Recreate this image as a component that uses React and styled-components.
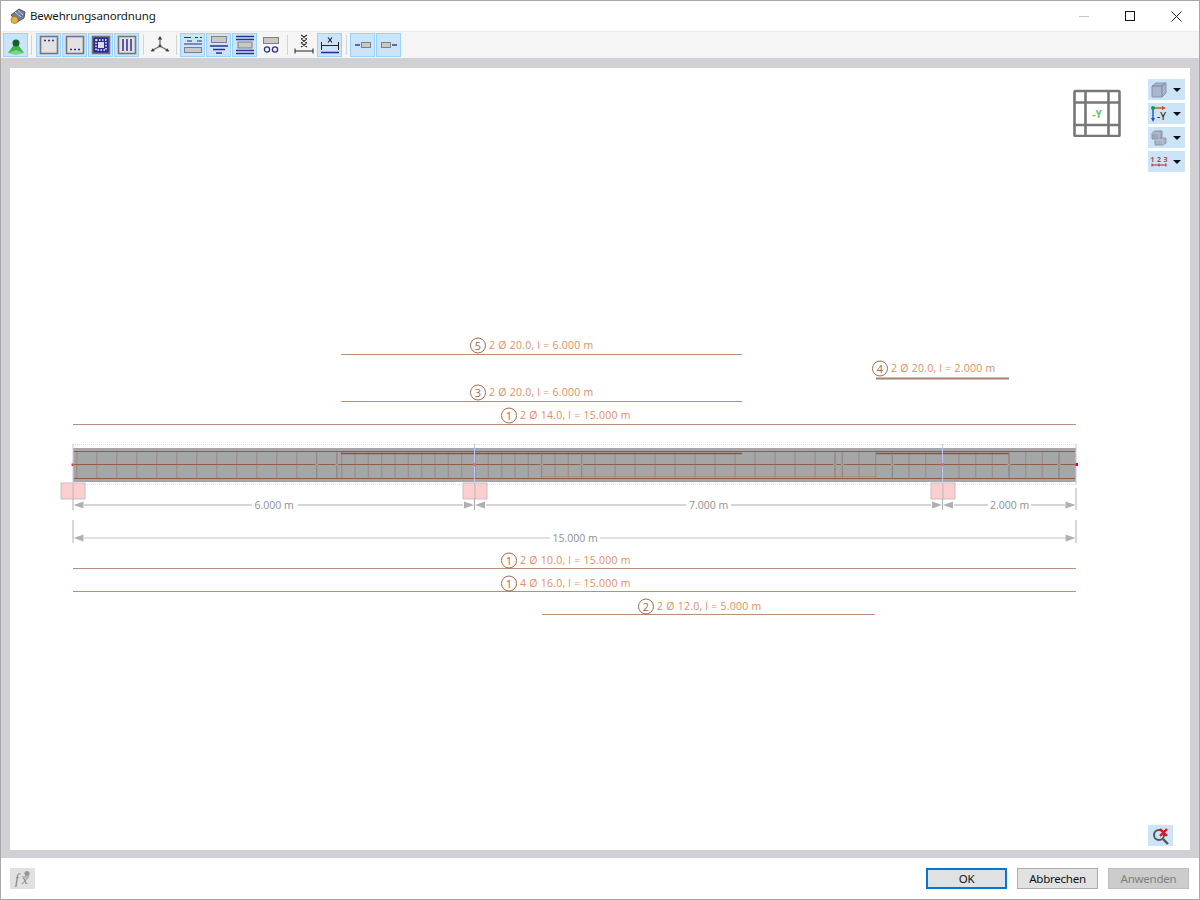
import React from 'react';
import styled, { createGlobalStyle } from 'styled-components';

const GlobalStyle = createGlobalStyle`
    html, body {
        margin: 0;
        padding: 0;
        height: 100%;
        background: white;
    }
    #root {
        height: 100%;
    }
`

//Styling
const Window = styled.div`
    box-sizing: border-box;
    width: 1200px;
    height: 900px;
    display: flex;
    flex-direction: column;
    background: white;
    border: 1px solid #a8a8a8;
    font-family: "Noto Sans", "Open Sans", sans-serif;
    font-size: 12px;
    color: #1a1a1a;
`

const TitleBar = styled.div`
    height: 30px;
    display: flex;
    align-items: center;
    padding-left: 8px;
`

const Title = styled.div`
    flex: 1;
    margin-left: 3px;
    padding-bottom: 2px;
    font-size: 11.5px;
    letter-spacing: -0.15px;
`

const WindowButton = styled.div`
    width: 46px;
    height: 30px;
    display: flex;
    align-items: center;
    justify-content: center;
`

const Toolbar = styled.div`
    height: 27px;
    display: flex;
    align-items: center;
    padding-left: 2px;
    background: #f5f5f5;
    border-top: 1px solid #ececec;
    box-sizing: border-box;
`

const ToolButton = styled.div`
    box-sizing: border-box;
    width: 25px;
    height: 24px;
    margin-right: 1px;
    display: flex;
    align-items: center;
    justify-content: center;
    background: ${props => props.$on ? '#cce4f7' : 'transparent'};
    border: 1px solid ${props => props.$on ? '#99d1ff' : 'transparent'};
`

const Separator = styled.div`
    width: 1px;
    height: 20px;
    margin: 0 ${props => props.$right || 3}px 0 ${props => props.$left || 3}px;
    background: #d4d4d4;
`

const Workspace = styled.div`
    flex: 1;
    display: flex;
    padding: 10px 9px 8px;
    background: #d0d0d5;
`

const Canvas = styled.div`
    position: relative;
    flex: 1;
    background: white;
`

const Drawing = styled.svg`
    display: block;
    width: 100%;
    height: 100%;
`

const Label = styled.text`
    font-family: "Open Sans", "Noto Sans", sans-serif;
    font-size: 10.5px;
    letter-spacing: 0.25px;
    fill: #e38d62;
`

const Bubble = styled.text`
    font-family: "Open Sans", "Noto Sans", sans-serif;
    font-size: 11px;
    fill: #a5684c;
    text-anchor: middle;
`

const DimText = styled.text`
    font-family: "Open Sans", "Noto Sans", sans-serif;
    font-size: 10.5px;
    fill: #8f8f8f;
    text-anchor: middle;
`

const CubeLabel = styled.text`
    font-family: "Noto Sans", sans-serif;
    font-size: 10px;
    font-weight: 700;
    fill: #62c46c;
    text-anchor: middle;
`

const IconText = styled.text`
    font-family: "Noto Sans", sans-serif;
    font-size: ${props => props.$size || 8}px;
    font-weight: ${props => props.$weight || 400};
    fill: ${props => props.$color || '#111'};
`

const FormulaText = styled.text`
    font-family: "Liberation Serif", serif;
    font-style: italic;
    font-size: ${props => props.$size || 13}px;
    fill: #808080;
`

const ViewCube = styled.svg`
    position: absolute;
    top: 21px;
    right: 69px;
`

const SideTools = styled.div`
    position: absolute;
    top: 11px;
    right: 5px;
    display: flex;
    flex-direction: column;
    gap: 3px;
`

const SideButton = styled.div`
    width: 37px;
    height: 21px;
    display: flex;
    align-items: center;
    padding-left: 1px;
    box-sizing: border-box;
    gap: 4px;
    background: #cce4f7;
`

const Caret = styled.div`
    width: 0;
    height: 0;
    border-left: 4px solid transparent;
    border-right: 4px solid transparent;
    border-top: 4px solid #111;
`

const ClearButton = styled.div`
    position: absolute;
    right: 17px;
    bottom: 4px;
    width: 25px;
    height: 21px;
    display: flex;
    align-items: center;
    justify-content: center;
    background: #cce4f7;
`

const Footer = styled.div`
    height: 41px;
    box-sizing: border-box;
    display: flex;
    align-items: center;
    padding: 0 10px 0 9px;
`

const FormulaButton = styled.div`
    width: 25px;
    height: 21px;
    margin-right: auto;
    display: flex;
    align-items: center;
    justify-content: center;
    background: #e1e1e1;
`

const Button = styled.div`
    box-sizing: border-box;
    width: 81px;
    height: 21px;
    margin-left: 10px;
    display: flex;
    align-items: center;
    justify-content: center;
    font-size: 11.5px;
    letter-spacing: -0.25px;
    background: ${props => props.$disabled ? '#cccccc' : '#e1e1e1'};
    color: ${props => props.$disabled ? '#7f7f7f' : '#111'};
    border: ${props => props.$primary ? '2px solid #0078d7' : props.$disabled ? '1px solid #bfbfbf' : '1px solid #adadad'};
`

//Data for the drawing, in page coordinates
const rebars = [
    { mark: 5, text: '2 Ø 20.0, l = 6.000 m', x1: 341, x2: 742, y: 354, cx: 478, ly: 345 },
    { mark: 4, text: '2 Ø 20.0, l = 2.000 m', x1: 876, x2: 1009, y: 378, cx: 880, ly: 368, thick: true },
    { mark: 3, text: '2 Ø 20.0, l = 6.000 m', x1: 341, x2: 742, y: 401, cx: 478, ly: 392 },
    { mark: 1, text: '2 Ø 14.0, l = 15.000 m', x1: 73, x2: 1076, y: 424, cx: 509, ly: 415 },
    { mark: 1, text: '2 Ø 10.0, l = 15.000 m', x1: 73, x2: 1076, y: 568, cx: 509, ly: 560 },
    { mark: 1, text: '4 Ø 16.0, l = 15.000 m', x1: 73, x2: 1076, y: 591, cx: 509, ly: 583 },
    { mark: 2, text: '2 Ø 12.0, l = 5.000 m', x1: 542, x2: 875, y: 614, cx: 646, ly: 606 },
]

const range = (start, step, count) => Array.from({ length: count }, (_, i) => start + step * i)

const stirrups = [
    ...range(76.7, 20, 14),
    ...range(341.7, 13.33, 20),
    ...range(615, 20, 12),
    ...range(842.3, 16.67, 14),
]

//stirrups that carry a small ring at mid height
const ringed = [316.7, 336.7, 541.7, 581.7, 835, 842.3, 892.3, 1009, 1059]

const supports = [73, 475, 943]
const gridLines = [73, 474.5, 942.5, 1076]

function ArrowHead({ x, y, dir }) {
    return <polygon points={`${x},${y} ${x + dir * 10},${y - 3.5} ${x + dir * 10},${y + 3.5}`} fill="#b0b0b0" />
}

function Beam() {
    return (
        <g>
            <rect x="73" y="448" width="1003" height="34" fill="#a6a6a6" />
            {stirrups.map(x => (
                <path key={x} d={`M${x} 451V479`} stroke="#9d908d" strokeWidth="1.4" />
            ))}
            <path d="M74 451.5H1075M74 464.5H1075M74 478.5H1075" stroke="#8f5f45" strokeWidth="1" />
            <path d="M341 453.5H742M876 453.5H1009" stroke="#85563f" strokeWidth="1.6" />
            <path d="M542 476.5H875" stroke="#a8908a" strokeWidth="1" />
            {ringed.map(x => (
                <g key={x}>
                    <path d={`M${x} 453V477`} stroke="#8f8481" strokeWidth="0.8" />
                    <circle cx={x} cy="464.5" r="1.3" fill="#a6a6a6" stroke="#918a88" strokeWidth="0.6" />
                </g>
            ))}
            <path d="M73 444.5H1076M73 484.5H1076" stroke="#d8d4fb" strokeWidth="1" strokeDasharray="1 1" />
            {supports.map(x => (
                <rect key={x} x={x - 12} y="483" width="24" height="16" fill="#fbcfd0" stroke="#c6c2c2" />
            ))}
            {gridLines.map(x => (
                <path key={x} d={`M${x} 444V484`} stroke="#c5c3f2" strokeWidth="1" />
            ))}
            <path d="M73 484V499M475 484V499M943 484V499" stroke="#bdb5b5" strokeWidth="1" />
            <rect x="71.5" y="463.5" width="2" height="2.5" fill="#f03040" />
            <rect x="1075.5" y="463" width="2.5" height="3" fill="#f00020" />
            <circle cx="474.5" cy="464.5" r="1.5" fill="#d86a70" />
            <circle cx="942.5" cy="464.5" r="1.5" fill="#d86a70" />
        </g>
    )
}

function Dimensions() {
    return (
        <g>
            <path d="M73 499V510M474.5 499V510M942.5 499V510M1076 488V510M73 520V543M1076 520V543" stroke="#b0b0b0" strokeWidth="1" />
            <path d="M84 505H252M298 505H463M486 505H686M731 505H931M954 505H988M1031 505H1065" stroke="#c8c8c8" strokeWidth="1.6" />
            <path d="M84 538H550M600 538H1065" stroke="#c4c4c4" strokeWidth="1.2" />
            <ArrowHead x={73.5} y={505} dir={1} />
            <ArrowHead x={474} y={505} dir={-1} />
            <ArrowHead x={475} y={505} dir={1} />
            <ArrowHead x={942} y={505} dir={-1} />
            <ArrowHead x={943} y={505} dir={1} />
            <ArrowHead x={1075.5} y={505} dir={-1} />
            <ArrowHead x={73.5} y={538} dir={1} />
            <ArrowHead x={1075.5} y={538} dir={-1} />
            <DimText x="274" y="509">6.000 m</DimText>
            <DimText x="708.5" y="509">7.000 m</DimText>
            <DimText x="1009.5" y="509">2.000 m</DimText>
            <DimText x="575" y="542">15.000 m</DimText>
        </g>
    )
}

function Rebar({ bar }) {
    return (
        <g>
            <path d={`M${bar.x1} ${bar.y + 0.5}H${bar.x2}`} stroke={bar.thick ? '#a87f68' : '#bd8d74'} strokeWidth={bar.thick ? 2 : 1} />
            <circle cx={bar.cx} cy={bar.ly + 0.5} r="7.5" fill="white" stroke="#a5684c" strokeWidth="1" />
            <Bubble x={bar.cx} y={bar.ly + 4.5}>{bar.mark}</Bubble>
            <Label x={bar.cx + 11} y={bar.ly + 4}>{bar.text}</Label>
        </g>
    )
}

const Icon = ({ children, size = 22 }) => (
    <svg width={size} height={size} viewBox="0 0 22 22">{children}</svg>
)

const GrayBox = props => <rect fill="#c8c8c8" stroke="#808080" strokeWidth="1" {...props} />

const NAVY = '#2b2f9c'

const toolIcons = {
    person: (
        <Icon>
            <polygon points="3,19 8,12 14,12 19,19" fill="#3cb44b" />
            <polygon points="3,19 11,16 19,19 11,21" fill="#7ad684" />
            <circle cx="11" cy="9" r="3.5" fill="#14602a" />
        </Icon>
    ),
    dotsTop: (
        <Icon>
            <rect x="2.5" y="2.5" width="17" height="17" fill="#e2e2e2" stroke="#777" strokeWidth="1.6" />
            <path d="M6 6.5h2M10 6.5h2M14 6.5h2" stroke={NAVY} strokeWidth="1.5" />
        </Icon>
    ),
    dotsBottom: (
        <Icon>
            <rect x="2.5" y="2.5" width="17" height="17" fill="#e2e2e2" stroke="#777" strokeWidth="1.6" />
            <path d="M6 15.5h2M10 15.5h2M14 15.5h2" stroke={NAVY} strokeWidth="1.5" />
        </Icon>
    ),
    dotsAround: (
        <Icon>
            <rect x="2.5" y="2.5" width="17" height="17" fill={NAVY} stroke="#777" strokeWidth="1.6" />
            <rect x="6" y="6" width="10" height="10" fill="none" stroke="white" strokeWidth="1.4" strokeDasharray="1.5 1.5" />
            <rect x="8" y="8" width="6" height="6" fill="#dcdcec" />
        </Icon>
    ),
    bars: (
        <Icon>
            <rect x="2.5" y="2.5" width="17" height="17" fill="#e2e2e2" stroke="#777" strokeWidth="1.6" />
            <path d="M7 5v12M11 5v12M15 5v12" stroke={NAVY} strokeWidth="1.5" />
        </Icon>
    ),
    axes: (
        <Icon>
            <path d="M11 12V5M11 12L4 16M11 12L18 16" stroke="#666" strokeWidth="1.2" fill="none" />
            <path d="M11 2l-2.3 3.5h4.600zM1.5 17.5l4.200-.3-1.800-3zM20.500 17.500l-4.200-.3 1.800-3z" fill="#3c3c3c" />
            <circle cx="11" cy="12" r="1.4" fill="#444" />
        </Icon>
    ),
    layersTop: (
        <Icon>
            <path d="M2 3.5h7M13 3.5h3M18 3.5h2M5 7h5M15 7h5M2 10h18" stroke={NAVY} strokeWidth="1.2" />
            <GrayBox x="2.5" y="13.5" width="17" height="5" />
        </Icon>
    ),
    funnel: (
        <Icon>
            <GrayBox x="3.5" y="2.5" width="15" height="6" />
            <path d="M2 12h18M5 15.5h12M8 19h6" stroke={NAVY} strokeWidth="1.3" />
        </Icon>
    ),
    stack: (
        <Icon>
            <path d="M2 2.5h18M2 5.5h18M2 16.5h18M2 19.5h18" stroke={NAVY} strokeWidth="1.3" />
            <GrayBox x="4" y="8" width="14" height="6" />
        </Icon>
    ),
    rings: (
        <Icon>
            <GrayBox x="3.5" y="3.5" width="15" height="6" />
            <circle cx="7" cy="15.5" r="2.6" fill="none" stroke={NAVY} strokeWidth="1.3" />
            <circle cx="15" cy="15.5" r="2.6" fill="none" stroke={NAVY} strokeWidth="1.3" />
        </Icon>
    ),
    coil: (
        <Icon>
            <path d="M8 1L14 5M14 1L8 5M8 5L14 9M14 5L8 9M8 9L14 13M14 9L8 13" stroke="#333" strokeWidth="1.2" fill="none" />
            <path d="M2 17H20M2 14.5v5M20 14.5v5" stroke="#222" strokeWidth="1" />
        </Icon>
    ),
    span: (
        <Icon>
            <path d="M9 3.5l4 5M13 3.5L9 8.5" stroke="#222" strokeWidth="1.2" />
            <path d="M3 11.5H19M2.5 8v8M19.5 8v8" stroke="#222" strokeWidth="1" />
            <path d="M2 18.5H20" stroke={NAVY} strokeWidth="1.6" />
        </Icon>
    ),
    lapLeft: (
        <Icon>
            <path d="M3 11h5" stroke={NAVY} strokeWidth="1.4" />
            <GrayBox x="9.5" y="8.5" width="9" height="5" />
        </Icon>
    ),
    lapRight: (
        <Icon>
            <GrayBox x="3.5" y="8.5" width="9" height="5" />
            <path d="M14 11h5" stroke={NAVY} strokeWidth="1.4" />
        </Icon>
    ),
}

const SideIcon = ({ children }) => <svg width="20" height="20" viewBox="0 0 20 20">{children}</svg>

export default function App() {
    return (
        <Window>
            <GlobalStyle />
            <TitleBar>
                <svg width="18" height="18" viewBox="0 0 18 18">
                    <path d="M2 8L10 2l6 3-1 6-7 4z" fill="#6f7f98" stroke="#333c50" strokeWidth="0.8" />
                    <path d="M6 5l6 5M9 3.5l5 4.500" stroke="#c4cede" strokeWidth="1" />
                    <circle cx="5.5" cy="13" r="3.6" fill="#e8b23a" stroke="#8a6a20" strokeWidth="0.6" />
                </svg>
                <Title>Bewehrungsanordnung</Title>
                <WindowButton>
                    <svg width="10" height="10"><path d="M0 5.5H10" stroke="#c8c8c8" /></svg>
                </WindowButton>
                <WindowButton>
                    <svg width="10" height="10"><rect x="0.5" y="0.5" width="9" height="9" fill="none" stroke="#111" /></svg>
                </WindowButton>
                <WindowButton>
                    <svg width="11" height="11"><path d="M0.5 0.5L10.5 10.5M10.5 0.5L0.5 10.5" stroke="#222" /></svg>
                </WindowButton>
            </TitleBar>
            <Toolbar>
                <ToolButton $on>{toolIcons.person}</ToolButton>
                <Separator $left={2} $right={4} />
                <ToolButton $on>{toolIcons.dotsTop}</ToolButton>
                <ToolButton $on>{toolIcons.dotsBottom}</ToolButton>
                <ToolButton $on>{toolIcons.dotsAround}</ToolButton>
                <ToolButton $on>{toolIcons.bars}</ToolButton>
                <Separator />
                <ToolButton>{toolIcons.axes}</ToolButton>
                <Separator />
                <ToolButton $on>{toolIcons.layersTop}</ToolButton>
                <ToolButton $on>{toolIcons.funnel}</ToolButton>
                <ToolButton $on>{toolIcons.stack}</ToolButton>
                <ToolButton>{toolIcons.rings}</ToolButton>
                <Separator />
                <ToolButton>{toolIcons.coil}</ToolButton>
                <ToolButton $on>{toolIcons.span}</ToolButton>
                <Separator />
                <ToolButton $on>{toolIcons.lapLeft}</ToolButton>
                <ToolButton $on>{toolIcons.lapRight}</ToolButton>
            </Toolbar>
            <Workspace>
                <Canvas>
                    <Drawing viewBox="10 68 1180 781" preserveAspectRatio="xMinYMin meet">
                        {rebars.map(bar => <Rebar key={bar.text + bar.y} bar={bar} />)}
                        <Beam />
                        <Dimensions />
                    </Drawing>
                    <ViewCube width="48" height="48" viewBox="0 0 48 48">
                        <rect x="1.5" y="2" width="45" height="45" rx="1" fill="none" stroke="#777" strokeWidth="2.6" />
                        <path d="M12.5 2V47M35.5 2V47M1.5 13.5H46.5M1.5 36H46.5" stroke="#777" strokeWidth="2.6" />
                        <CubeLabel x="24" y="29">-Y</CubeLabel>
                    </ViewCube>
                    <SideTools>
                        <SideButton>
                            <SideIcon>
                                <path d="M3 6l4-3h10v10l-4 4H3z" fill="#a9b6cf" stroke="#8a93a8" />
                                <path d="M3 6h10v11M13 6l4-3" stroke="#7d869c" fill="none" />
                            </SideIcon>
                            <Caret />
                        </SideButton>
                        <SideButton>
                            <SideIcon>
                                <path d="M4 4V16" stroke="#1c4fc0" strokeWidth="1.4" />
                                <path d="M2 14h4l-2 4z" fill="#1c4fc0" />
                                <path d="M4 4H14" stroke="#d84a10" strokeWidth="1.4" />
                                <path d="M13 2v4l4-2z" fill="#d84a10" />
                                <circle cx="4" cy="4" r="2" fill="#0c9c5c" />
                                <IconText x="8" y="16" $size={10}>-Y</IconText>
                            </SideIcon>
                            <Caret />
                        </SideButton>
                        <SideButton>
                            <SideIcon>
                                <path d="M3 5l3-2h7v6l-3 2H3z" fill="#9fa9bb" stroke="#8a93a8" />
                                <path d="M6 12l3-2h8v5l-3 2H6z" fill="#a9b3c6" stroke="#8a93a8" />
                                <path d="M3 5h7v6M6 12h8v5" stroke="#bcc5d5" fill="none" />
                            </SideIcon>
                            <Caret />
                        </SideButton>
                        <SideButton>
                            <SideIcon>
                                <path d="M3 13H17M3 11.5v3M10 11.5v3M17 11.5v3" stroke="#c02030" strokeWidth="1" />
                                <IconText x="1.5" y="9.5" $size={7} $weight={700} $color="#e03040">1</IconText>
                                <IconText x="8" y="9.5" $size={7} $weight={700} $color="#e03040">2</IconText>
                                <IconText x="14.5" y="9.5" $size={7} $weight={700} $color="#e03040">3</IconText>
                            </SideIcon>
                            <Caret />
                        </SideButton>
                    </SideTools>
                    <ClearButton>
                        <svg width="20" height="18" viewBox="0 0 20 18">
                            <circle cx="8" cy="8" r="5" fill="none" stroke="#555" strokeWidth="2" />
                            <path d="M12 12l5 5" stroke="#555" strokeWidth="2.4" />
                            <path d="M9 2l7 7M16 2L9 9" stroke="#e8101c" strokeWidth="2.4" />
                        </svg>
                    </ClearButton>
                </Canvas>
            </Workspace>
            <Footer>
                <FormulaButton>
                    <svg width="22" height="20" viewBox="0 0 22 20">
                        <FormulaText x="3" y="15" $size={14}>f</FormulaText>
                        <FormulaText x="10" y="15" $size={13}>x</FormulaText>
                        <circle cx="15" cy="4.5" r="2.6" fill="#999" />
                        <path d="M10 8h7" stroke="#888" strokeWidth="1" />
                    </svg>
                </FormulaButton>
                <Button $primary>OK</Button>
                <Button>Abbrechen</Button>
                <Button $disabled>Anwenden</Button>
            </Footer>
        </Window>
    )
}
